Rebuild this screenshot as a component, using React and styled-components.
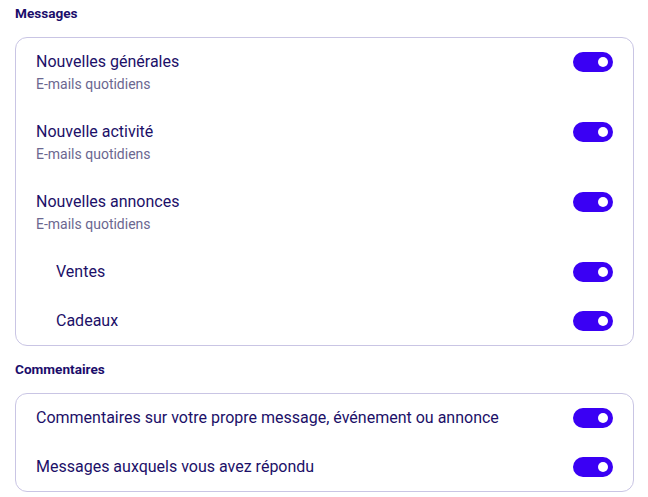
import React, { useState } from 'react'
import styled, { createGlobalStyle } from 'styled-components'

const GlobalStyle = createGlobalStyle`
  body {
    margin: 0;
    background: #ffffff;
    font-family: Roboto, "Noto Sans", sans-serif;
  }
`

const Page = styled.div`
  padding: 3px 14px 0 15px;
  display: flex;
  flex-direction: column;
`

const Section = styled.section`
  display: flex;
  flex-direction: column;
  margin-bottom: 13px;
`

const Heading = styled.h3`
  margin: 0 0 14px 0;
  font-size: 13.6px;
  line-height: 20px;
  font-weight: 700;
  color: #1b0d6b;
`

const Card = styled.div`
  border: 1px solid #c9c5e4;
  border-radius: 12px;
  padding: 12px 20px;
  display: flex;
  flex-direction: column;
  gap: 25px;
`

const Row = styled.div`
  display: flex;
  align-items: flex-start;
  justify-content: space-between;
  padding-left: ${p => (p.$indent ? '20px' : '0')};
`

const Texts = styled.div`
  display: flex;
  flex-direction: column;
`

const Title = styled.div`
  font-size: 16px;
  line-height: 24px;
  color: #1c1068;
`

const Sub = styled.div`
  font-size: 14px;
  line-height: 21px;
  color: #6b6790;
`

const Track = styled.button`
  width: 40px;
  height: 20px;
  margin-top: 2px;
  border: none;
  border-radius: 10px;
  padding: 0 5px;
  background: ${p => (p.$on ? '#3a00f4' : '#c9c5e4')};
  display: flex;
  align-items: center;
  justify-content: ${p => (p.$on ? 'flex-end' : 'flex-start')};
  cursor: pointer;
  flex-shrink: 0;
`

const Knob = styled.span`
  width: 10px;
  height: 10px;
  border-radius: 50%;
  background: #ffffff;
`

function Toggle({ on, onClick }) {
  return (
    <Track $on={on} onClick={onClick} aria-pressed={on}>
      <Knob />
    </Track>
  )
}

const sections = [
  {
    title: 'Messages',
    items: [
      { label: 'Nouvelles générales', sub: 'E-mails quotidiens' },
      { label: 'Nouvelle activité', sub: 'E-mails quotidiens' },
      { label: 'Nouvelles annonces', sub: 'E-mails quotidiens' },
      { label: 'Ventes', indent: true },
      { label: 'Cadeaux', indent: true }
    ]
  },
  {
    title: 'Commentaires',
    items: [
      { label: 'Commentaires sur votre propre message, événement ou annonce' },
      { label: 'Messages auxquels vous avez répondu' }
    ]
  }
]

export default function App() {
  const [state, setState] = useState({})

  const flip = key => setState(s => ({ ...s, [key]: s[key] === false ? true : false }))

  return (
    <>
      <GlobalStyle />
      <Page>
        {sections.map(sec => (
          <Section key={sec.title}>
            <Heading>{sec.title}</Heading>
            <Card>
              {sec.items.map(item => {
                const key = sec.title + item.label
                return (
                  <Row key={key} $indent={item.indent}>
                    <Texts>
                      <Title>{item.label}</Title>
                      {item.sub && <Sub>{item.sub}</Sub>}
                    </Texts>
                    <Toggle on={state[key] !== false} onClick={() => flip(key)} />
                  </Row>
                )
              })}
            </Card>
          </Section>
        ))}
      </Page>
    </>
  )
}
